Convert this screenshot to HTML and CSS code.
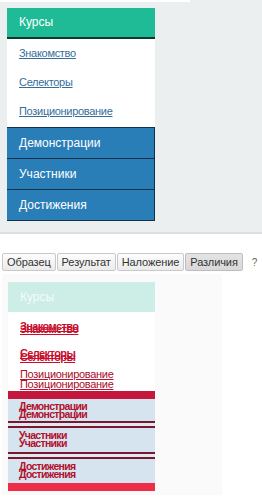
FILE: index.html
```html
<!DOCTYPE html>
<html>
<head>
<meta charset="utf-8">
<link rel="stylesheet" href="styles.css">
</head>
<body>
<div class="top">
  <div class="strip"></div>
  <nav class="menu">
    <div class="head">Курсы</div>
    <div class="links">
      <a class="link">Знакомство</a>
      <a class="link">Селекторы</a>
      <a class="link">Позиционирование</a>
    </div>
    <div class="item">Демонстрации</div>
    <div class="item">Участники</div>
    <div class="item">Достижения</div>
  </nav>
</div>
<div class="bottom">
  <div class="tabs">
    <span class="tab">Образец</span>
    <span class="tab">Результат</span>
    <span class="tab">Наложение</span>
    <span class="tab active">Различия</span>
    <span class="help">?</span>
  </div>
  <div class="panel">
    <div class="diff">
      <div class="dhead">Курсы</div>
      <div class="dlinks">
        <div class="dl close"><span>Знакомство</span><span>Знакомство</span></div>
        <div class="dl close2"><span>Селекторы</span><span>Селекторы</span></div>
        <div class="dl sep"><span>Позиционирование</span><span>Позиционирование</span></div>
      </div>
      <div class="redbar"></div>
      <div class="ditem first"><span>Демонстрации</span><span>Демонстрации</span></div>
      <div class="stripes"></div>
      <div class="ditem"><span>Участники</span><span>Участники</span></div>
      <div class="stripes"></div>
      <div class="ditem last"><span>Достижения</span><span>Достижения</span></div>
      <div class="redbar bright"></div>
    </div>
  </div>
</div>
</body>
</html>
```
FILE: styles.css
```css
html, body {
  margin: 0;
  padding: 0;
  background: #fff;
  font-family: "Liberation Sans", Arial, sans-serif;
}
.top {
  background: #eceff0;
  height: 232px;
  border-bottom: 2px solid #dcdfe0;
}
.strip {
  width: 190px;
  height: 2px;
  background: #fff;
}
.menu {
  margin: 6px 0 0 7px;
  width: 148px;
}
.head {
  height: 29px;
  background: #1fbb97;
  border-bottom: 2px solid #10372e;
  color: #fff;
  font-size: 12px;
  line-height: 29px;
  padding-left: 12px;
}
.links {
  background: #fff;
  height: 88px;
  padding-top: 7px;
  box-sizing: border-box;
  overflow: hidden;
}
.link {
  display: block;
  height: 29px;
  padding-left: 12px;
  font-size: 11px;
  line-height: 14px;
  letter-spacing: -0.3px;
  color: #336e9c;
  text-decoration: underline;
}
.item {
  height: 30px;
  background: #2a7eb8;
  border-top: 1px solid #12314a;
  border-right: 1px solid #12314a;
  color: #fff;
  font-size: 12px;
  line-height: 30px;
  padding-left: 12px;
}
.item:last-child {
  border-bottom: 1px solid #12314a;
}
.bottom {
  padding-top: 19px;
}
.tabs {
  display: flex;
  align-items: center;
  padding-left: 2px;
  gap: 1px;
  height: 18px;
}
.tab {
  height: 16px;
  border: 1px solid #c9c9c9;
  border-radius: 2px;
  background: linear-gradient(#fdfdfd, #ebebeb);
  color: #333;
  font-size: 11px;
  letter-spacing: -0.1px;
  line-height: 16px;
  padding: 0 4px;
}
.tab.active {
  background: linear-gradient(#e4e4e4, #d8d8d8);
  border-color: #bdbdbd;
}
.help {
  margin-left: 8px;
  font-size: 10px;
  color: #666;
}
.panel {
  margin: 3px 0 0 2px;
  width: 220px;
  height: 221px;
  background: #fafafa;
  padding: 8px 0 0 6px;
  box-sizing: border-box;
}
.diff {
  width: 147px;
}
.dhead {
  height: 30px;
  background: #cdeee6;
  color: #f4fbf9;
  font-size: 12px;
  line-height: 30px;
  padding-left: 12px;
}
.dlinks {
  background: #fff;
  height: 79px;
  padding: 9px 0 0 12px;
  box-sizing: border-box;
}
.dl {
  color: #c8102e;
  font-size: 11px;
  font-weight: bold;
  text-decoration: underline;
  letter-spacing: -0.6px;
}
.dl span {
  display: block;
  line-height: 10px;
}
.dl.close span + span { margin-top: -7px; }
.dl.close { height: 27px; }
.dl.close2 span + span { margin-top: -6px; }
.dl.close2 { height: 21px; }
.dl.sep span { line-height: 10px; font-weight: normal; color: #a80c2a; letter-spacing: -0.3px; }
.redbar {
  height: 8px;
  background: #c5163e;
}
.redbar.bright {
  background: #ee2d48;
}
.ditem {
  background: #d5e4ef;
  height: 24px;
  padding: 3px 0 0 11px;
  box-sizing: border-box;
  color: #b2102c;
  font-size: 10.5px;
  font-weight: bold;
  letter-spacing: -0.7px;
}
.ditem.first { height: 22px; }
.ditem span {
  display: block;
  line-height: 8px;
}
.stripes {
  height: 2px;
  background: #7a1830;
  border-bottom: 3px solid #e0e8f0;
  box-shadow: 0 5px 0 #7a1830;
  margin-bottom: 2px;
}
```
